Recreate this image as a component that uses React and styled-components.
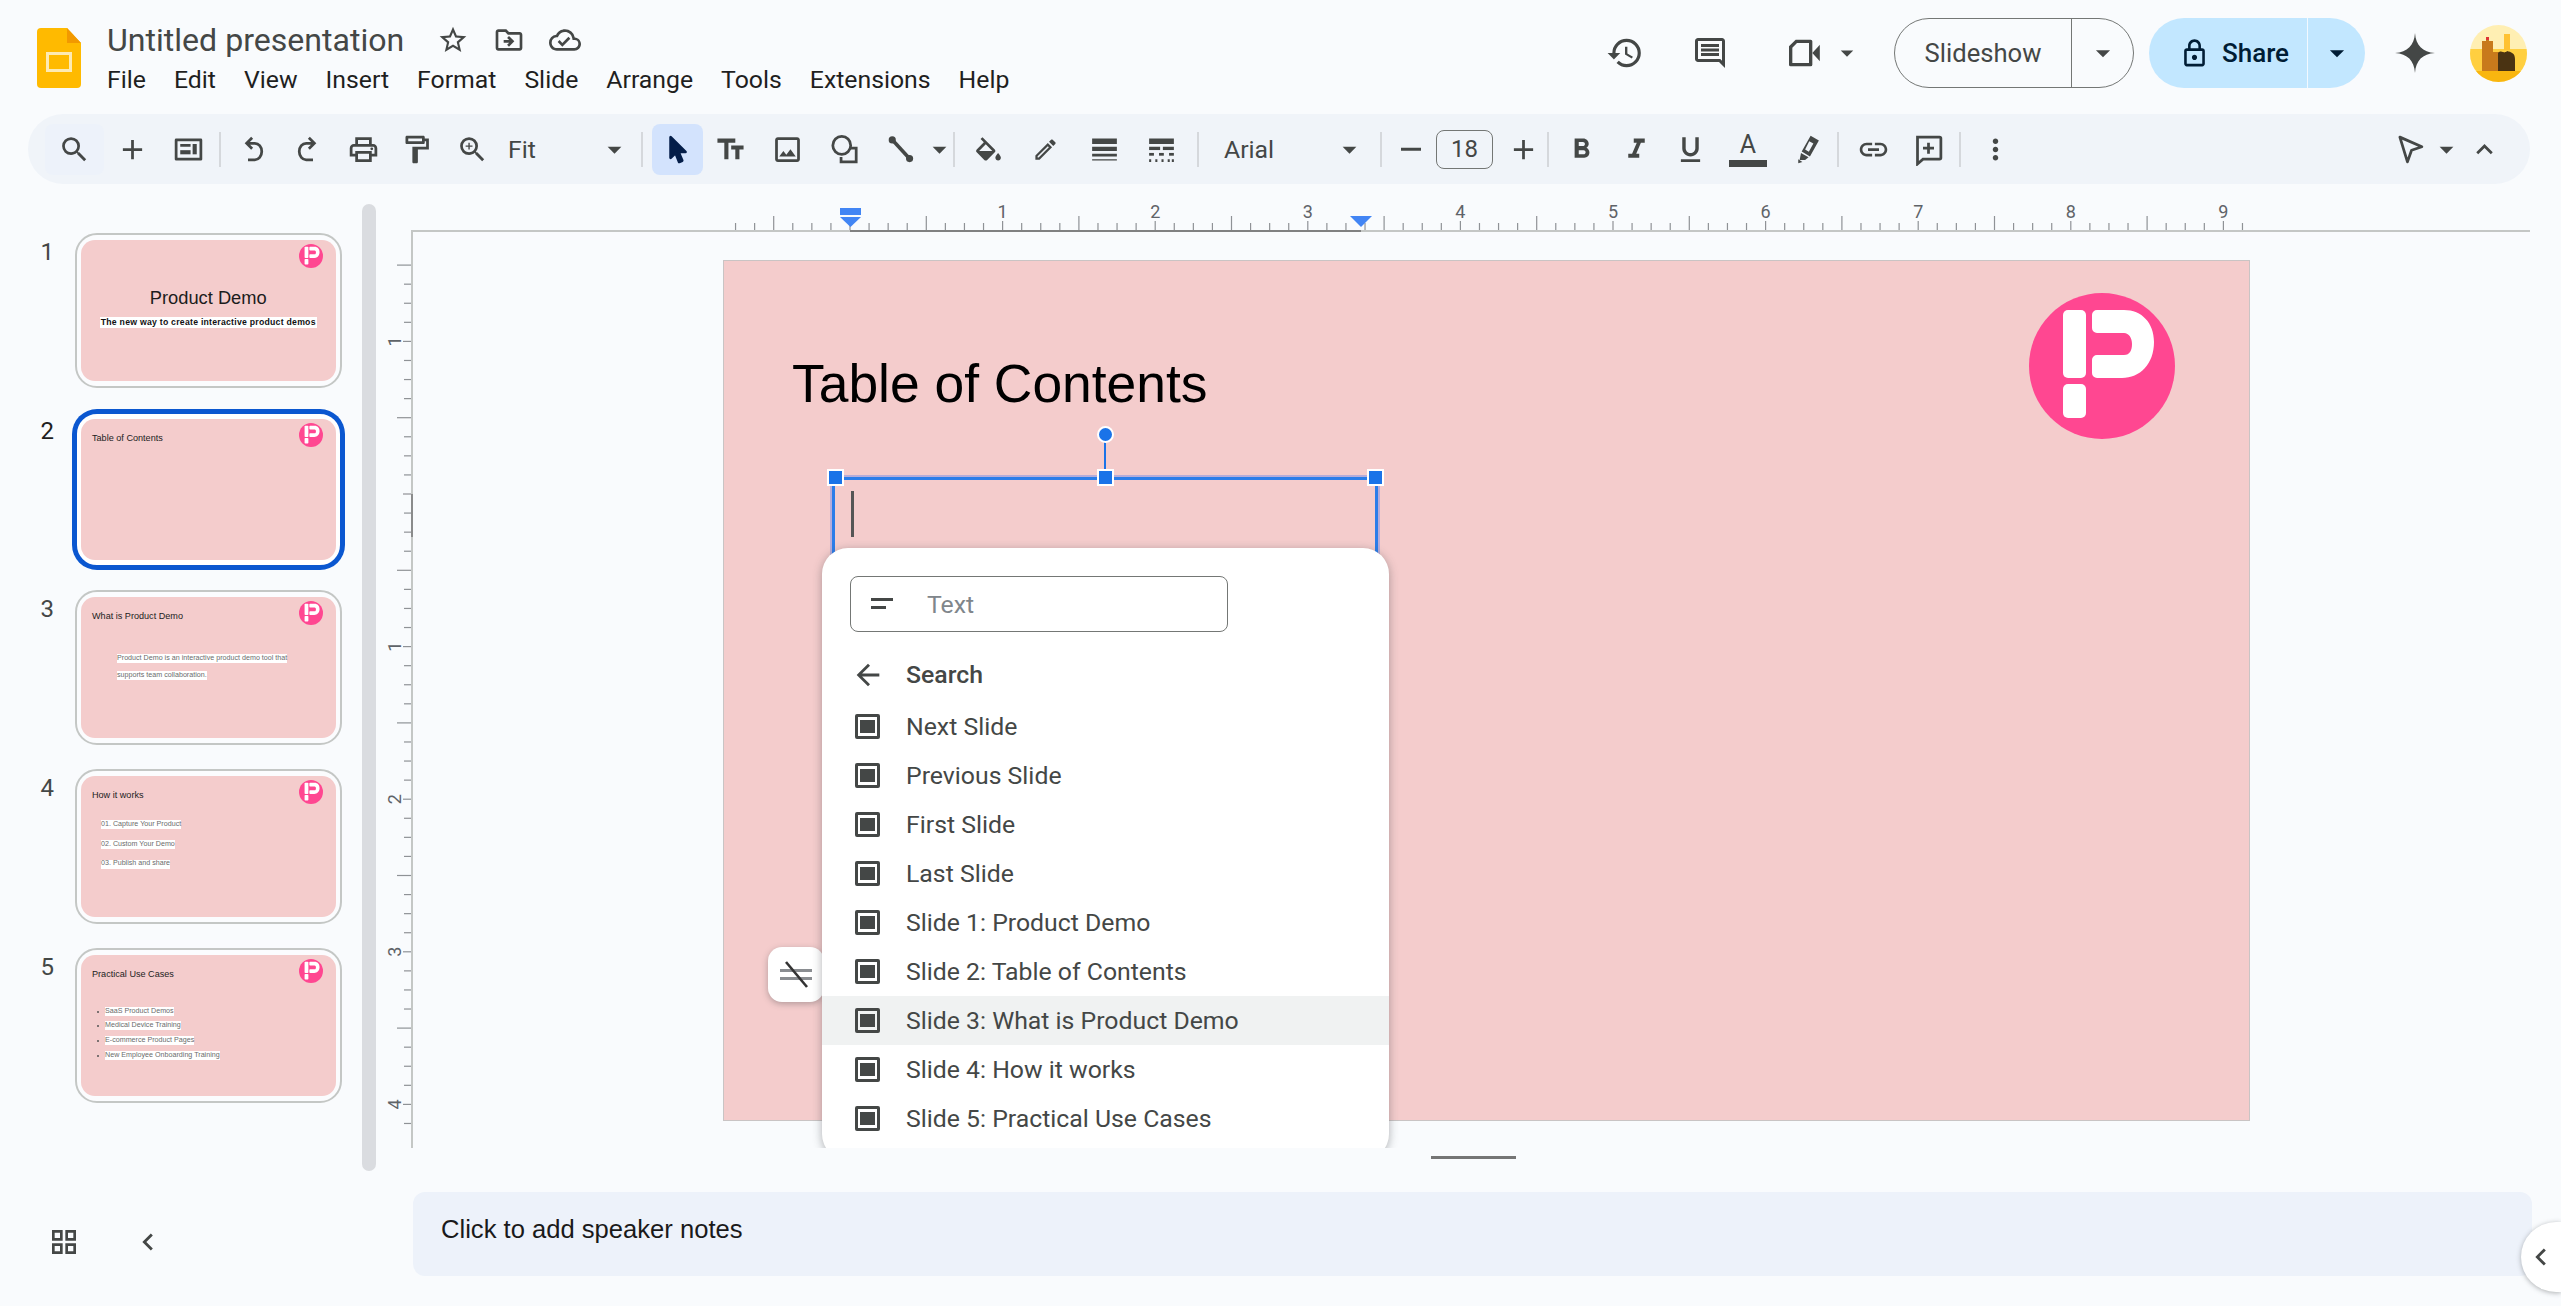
import React from 'react';
import styled, { createGlobalStyle } from 'styled-components';
import {
  MdSearch, MdAdd, MdOutlinePrint, MdOutlineFormatPaint, MdZoomIn,
  MdOutlineTextFields, MdOutlineImage, MdOutlineEdit,
  MdOutlineLineWeight, MdFormatBold, MdFormatItalic, MdFormatUnderlined, MdLink,
  MdMoreVert, MdHistory, MdArrowDropDown, MdArrowBack, MdOutlineLock, MdOutlineStarBorder,
  MdOutlineDriveFileMove, MdOutlineCloudDone, MdExpandLess, MdOutlineGridView,
  MdChevronLeft, MdOutlineComment
} from 'react-icons/md';

const GlobalStyle = createGlobalStyle`
  html, body {
    margin: 0;
    height: 100%;
    overflow: hidden;
    background: #f9fbfd;
    font-family: Roboto, "Liberation Sans", sans-serif;
  }
  * { box-sizing: border-box; }
`;

const Page = styled.div`
  position: relative;
  width: 2561px;
  height: 1306px;
  overflow: hidden;
  display: flex;
  flex-direction: column;
  color: #444746;
`;

/* header */
const Header = styled.header`
  height: 114px;
  flex: none;
  display: flex;
  justify-content: space-between;
`;

const HeaderLeft = styled.div`
  display: flex;
  align-items: flex-start;
  padding: 20px 0 0 37px;
  gap: 26px;
`;

const LogoBox = styled.div`
  margin-top: 8px;
  width: 44px;
  height: 60px;
`;

const TitleBlock = styled.div`
  display: flex;
  flex-direction: column;
`;

const TitleRow = styled.div`
  display: flex;
  align-items: center;
  height: 39px;
  gap: 24px;
`;

const DocTitle = styled.div`
  font-size: 32.1px;
  line-height: 40px;
  color: #444746;
  margin-right: 9px;
`;

const TitleIcon = styled.span`
  display: flex;
  width: 32px;
  justify-content: center;
  font-size: 32px;
  color: #444746;
`;

const MenuBar = styled.nav`
  display: flex;
  gap: 28px;
  height: 40px;
  align-items: center;
  font-size: 24.8px;
  color: #1f1f1f;
`;

const HeaderRight = styled.div`
  display: flex;
  align-items: flex-start;
  padding: 18px 34px 0 0;
`;

const ActionIcon = styled.span`
  display: flex;
  align-items: center;
  justify-content: center;
  height: 70px;
  width: ${({ $w }) => $w || 56}px;
  margin-left: ${({ $ml }) => $ml || 0}px;
  font-size: ${({ $size }) => $size || 38}px;
  color: #444746;
`;

const SplitButton = styled.div`
  display: flex;
  height: 70px;
  width: ${({ $w }) => $w}px;
  margin-left: ${({ $ml }) => $ml}px;
  border-radius: 35px;
  border: ${({ $filled }) => ($filled ? 'none' : '1.5px solid #747775')};
  background: ${({ $filled }) => ($filled ? '#c2e7ff' : 'transparent')};
  color: ${({ $filled }) => ($filled ? '#001d35' : '#444746')};
  font-size: ${({ $filled }) => ($filled ? 26 : 25.6)}px;
  font-weight: ${({ $filled }) => ($filled ? 500 : 400)};
`;

const SplitMain = styled.div`
  display: flex;
  align-items: center;
  justify-content: center;
  gap: 12px;
  width: ${({ $w }) => $w}px;
  padding-left: ${({ $pl }) => $pl || 0}px;
`;

const SplitDrop = styled.div`
  flex: 1;
  display: flex;
  align-items: center;
  justify-content: center;
  font-size: 34px;
  border-left: 1.5px solid ${({ $light }) => ($light ? '#f2f9ff' : '#747775')};
`;

const Avatar = styled.div`
  width: 57px;
  height: 57px;
  margin: 7px 0 0 30px;
  border-radius: 50%;
  overflow: hidden;
`;

/* toolbar */
const Toolbar = styled.div`
  flex: none;
  display: flex;
  align-items: center;
  height: 70px;
  margin: 0 31px 0 28px;
  padding: 0 18px 0 17px;
  border-radius: 35px;
  background: #f0f4f9;
`;

const Tool = styled.span`
  flex: none;
  display: flex;
  align-items: center;
  justify-content: center;
  height: 51px;
  width: ${({ $w }) => $w}px;
  margin-left: ${({ $ml }) => $ml || 0}px;
  font-size: ${({ $size }) => $size || 33}px;
  border-radius: 8px;
  color: ${({ $active }) => ($active ? '#041e49' : '#444746')};
  background: ${({ $active, $soft }) => ($active ? '#d3e3fd' : $soft ? '#edf2fa' : 'transparent')};

  svg {
    flex: none;
  }
`;

const ToolText = styled.span`
  flex: none;
  width: ${({ $w }) => $w}px;
  padding-left: ${({ $pl }) => $pl}px;
  font-size: 24.8px;
  color: #444746;
`;

const ToolSep = styled.span`
  flex: none;
  width: 2px;
  height: 35px;
  margin: 0 3px 0 ${({ $ml }) => $ml || 3}px;
  background: #d5d8dc;
`;

const SizeInput = styled.span`
  flex: none;
  display: flex;
  align-items: center;
  justify-content: center;
  width: 57px;
  height: 39px;
  margin-right: 10px;
  border: 1.5px solid #747775;
  border-radius: 8px;
  font-size: 24px;
`;

const ColorA = styled.span`
  display: flex;
  flex-direction: column;
  align-items: center;
  width: 38px;
  font-size: 25px;
  line-height: 26px;
  color: #444746;

  &::after {
    content: '';
    width: 38px;
    height: 7px;
    margin-top: 2px;
    background: #444746;
  }
`;

const Spacer = styled.div`
  flex: 1;
`;

/* workspace */
const Workspace = styled.div`
  flex: 1;
  display: flex;
  min-height: 0;
`;

const Sidebar = styled.aside`
  flex: none;
  width: 380px;
  display: flex;
  flex-direction: column;
`;

const FilmArea = styled.div`
  display: flex;
  height: 987px;
`;

const ThumbList = styled.div`
  width: 362px;
  display: flex;
  flex-direction: column;
  gap: 23.7px;
  padding-top: 49px;
`;

const Scrollbar = styled.div`
  width: 14px;
  margin-top: 20px;
  border-radius: 7px;
  background: #dadce0;
`;

const ThumbRow = styled.div`
  display: flex;
  align-items: flex-start;
`;

const ThumbNum = styled.div`
  width: 54px;
  margin-right: 21px;
  text-align: right;
  font-size: 24px;
  line-height: 38px;
  color: ${({ $active }) => ($active ? '#1f1f1f' : '#444746')};
`;

const ThumbFrame = styled.div`
  width: 267px;
  height: 155px;
  padding: 5px 4.5px 5px 4px;
  border: 2px solid ${({ $active }) => ($active ? '#0b57d0' : '#c4c7c5')};
  box-shadow: ${({ $active }) => ($active ? '0 0 0 3px #0b57d0' : 'none')};
  border-radius: 22px;
  background: ${({ $active }) => ($active ? '#ffffff' : '#fbfcfe')};
`;

const ThumbSlide = styled.div`
  position: relative;
  height: 100%;
  padding: 13px 11px 0;
  border-radius: 14px;
  background: #f4cccc;
  font-family: "Liberation Sans", Arial, sans-serif;
`;

const ThumbLogo = styled.div`
  position: absolute;
  top: 4px;
  left: 218px;
  width: 24px;
  height: 24px;
`;

const ThumbTitle = styled.div`
  font-size: 9.1px;
  line-height: 12px;
  color: #222;
`;

const CoverSlide = styled.div`
  display: flex;
  flex-direction: column;
  align-items: center;
  padding-top: 34px;
`;

const CoverTitle = styled.div`
  font-size: 18.3px;
  line-height: 22px;
  color: #1c1c1c;
`;

const CoverSub = styled.span`
  margin-top: 8px;
  padding: 0 1px;
  font-size: 8.7px;
  line-height: 11px;
  font-weight: 700;
  letter-spacing: 0.25px;
  color: #111;
  background: #fff;
  white-space: nowrap;
`;

const ThumbBody = styled.div`
  margin: ${({ $top }) => $top}px 0 0 ${({ $left }) => $left}px;
  display: flex;
  flex-direction: column;
  align-items: flex-start;
  font-size: 7.15px;
  line-height: ${({ $lh }) => $lh}px;
  color: #6b6b6b;
`;

const ThumbLine = styled.span`
  position: relative;
  white-space: nowrap;
  background: linear-gradient(#fff, #fff) 0 50% / 100% 9px no-repeat;

  ${({ $bullet }) => $bullet && `
    &::before {
      content: '';
      position: absolute;
      left: -8px;
      top: 7px;
      width: 2px;
      height: 2px;
      border-radius: 50%;
      background: #555;
    }
  `}
`;

const SidebarFoot = styled.div`
  display: flex;
  align-items: center;
  padding: 54px 0 0 48px;
  gap: 51px;
  font-size: 32px;
  color: #444746;

  svg:last-child {
    font-size: 34px;
  }
`;

const Editor = styled.main`
  flex: 1;
  min-width: 0;
  display: flex;
  flex-direction: column;
`;

const HRuler = styled.svg`
  display: block;
  position: relative;
  z-index: 2;
  overflow: visible;
  width: 2181px;
  height: 46px;
  flex: none;
`;

const EditorBody = styled.div`
  display: flex;
  height: 918px;
  flex: none;
`;

const VRuler = styled.svg`
  display: block;
  position: relative;
  z-index: 2;
  overflow: visible;
  width: 31px;
  height: 918px;
  flex: none;
`;

const Canvas = styled.div`
  position: relative;
  width: 2119px;
  overflow: hidden;
  padding: 29px 0 0 311px;
  border-top: 2px solid #c4c7c5;
  border-left: 2px solid #c4c7c5;
`;

const Slide = styled.div`
  position: relative;
  width: 1525px;
  height: 859px;
  background: #f4cccc;
  box-shadow: 0 0 0 1px #c9c4c4;
  font-family: "Liberation Sans", Arial, sans-serif;
`;

const SlideTitle = styled.div`
  position: absolute;
  left: 68px;
  top: 88px;
  font-size: 53.4px;
  line-height: 70px;
  color: #000;
`;

const SlideLogo = styled.div`
  position: absolute;
  left: 1305px;
  top: 32px;
  width: 146px;
  height: 146px;
`;

const TextBox = styled.div`
  position: absolute;
  left: 108px;
  top: 216px;
  width: 546px;
  height: 300px;
  border: 3px solid #2b7de9;
  box-shadow: 0 0 0 2px rgba(120, 140, 230, 0.5);
`;

const Handle = styled.span`
  position: absolute;
  top: -11px;
  left: ${({ $at }) => $at};
  width: 17px;
  height: 17px;
  margin-left: -8px;
  background: #1a73e8;
  border: 2px solid #fff;
`;

const RotateLine = styled.span`
  position: absolute;
  left: 50%;
  top: -40px;
  width: 2px;
  height: 31px;
  margin-left: -1px;
  background: #1a73e8;
`;

const RotateKnob = styled.span`
  position: absolute;
  left: 50%;
  top: -54px;
  width: 17px;
  height: 17px;
  margin-left: -8.5px;
  border-radius: 50%;
  background: #1a73e8;
  border: 2px solid #fff;
`;

const Caret = styled.span`
  position: absolute;
  left: 16px;
  top: 11px;
  width: 3px;
  height: 46px;
  background: #555;
`;

const FloatButton = styled.div`
  position: absolute;
  left: 355px;
  top: 715px;
  width: 56px;
  height: 55px;
  display: flex;
  align-items: center;
  justify-content: center;
  border-radius: 14px;
  background: #fff;
  box-shadow: 0 2px 6px rgba(60, 64, 67, 0.35);
`;

const LinkMenu = styled.div`
  position: absolute;
  left: 409px;
  top: 316px;
  width: 567px;
  height: 612px;
  padding-top: 28px;
  border-radius: 26px;
  background: #fff;
  box-shadow: 0 2px 10px rgba(60, 64, 67, 0.4);
`;

const SearchBox = styled.div`
  display: flex;
  align-items: center;
  width: 378px;
  height: 56px;
  margin: 0 0 18px 28px;
  padding-left: 20px;
  gap: 34px;
  border: 1.5px solid #747775;
  border-radius: 8px;
  font-size: 24.8px;
  color: #80868b;
`;

const MenuRow = styled.div`
  display: flex;
  align-items: center;
  height: 49px;
  margin-bottom: ${({ $gapBelow }) => ($gapBelow ? '2.5px' : 0)};
  padding-left: 33px;
  gap: 26px;
  font-size: 24.8px;
  font-weight: ${({ $head }) => ($head ? 500 : 400)};
  color: #444746;
  background: ${({ $hover }) => ($hover ? '#f0f2f2' : 'transparent')};

  svg {
    flex: none;
    width: 25px;
    height: 25px;
  }
`;

const BackIcon = styled(MdArrowBack)`
  && {
    width: 34px;
    height: 34px;
    margin: 0 -4.5px;
  }
`;

const Grabber = styled.div`
  flex: none;
  width: 85px;
  height: 3px;
  margin: 8px 0 33px 1051px;
  background: #757575;
`;

const Notes = styled.div`
  flex: none;
  height: 84px;
  margin: 0 29px 0 33px;
  padding: 20px 28px;
  border-radius: 12px;
  background: #edf2fa;
  font-family: "Liberation Sans", Arial, sans-serif;
  font-size: 25.6px;
  line-height: 34px;
  color: #1a1a1a;
`;

const SideToggle = styled.div`
  position: absolute;
  right: 0;
  bottom: 14px;
  width: 40px;
  height: 70px;
  display: flex;
  align-items: center;
  justify-content: center;
  border-radius: 35px 0 0 35px;
  background: #fff;
  box-shadow: 0 1px 5px rgba(60, 64, 67, 0.4);
  font-size: 34px;
  color: #444746;
`;

const SlidesLogo = () => (
  <svg width="44" height="60" viewBox="0 0 44 60">
    <path d="M4 0h26l14 15v41a4 4 0 0 1-4 4H4a4 4 0 0 1-4-4V4a4 4 0 0 1 4-4z" fill="#ffba00" />
    <path d="M30 0l14 15H30z" fill="#f29900" />
    <rect x="10.5" y="25.5" width="23" height="17" fill="#ffba00" stroke="#fdeab3" strokeWidth="3" />
  </svg>
);

const BrandMark = () => (
  <svg width="100%" height="100%" viewBox="-73 -73 146 146">
    <circle r="73" fill="#ff4791" />
    <rect x="-39" y="-56" width="23" height="68" rx="5" fill="#fff" />
    <rect x="-39" y="18" width="23" height="34" rx="5" fill="#fff" />
    <path
      d="M-10-51a5 5 0 0 1 5-5h27c18 0 30 13 30 32 0 22-14 36-32 36H-5a5 5 0 0 1-5-5V-6a5 5 0 0 1 5-5h27c6 0 8-5 8-11s-3-11-8-11H-5a5 5 0 0 1-5-5z"
      fill="#fff"
    />
  </svg>
);

const AvatarArt = () => (
  <svg width="57" height="57" viewBox="0 0 57 57">
    <rect width="57" height="57" fill="#ffefb3" />
    <rect y="24" width="57" height="24" fill="#ffcf40" />
    <rect y="46" width="57" height="11" fill="#f9b60f" />
    <rect x="34" y="9" width="6" height="16" fill="#ffc233" />
    <path d="M12 46V16h4v-3h3v3h4v11h8c5 0 9 3 9 7v12z" fill="#c87a1c" />
    <path d="M28 46V28c4-4 6 2 9-2 4 1 8 2 8 8v12z" fill="#4a3312" />
    <rect x="16" y="12" width="3" height="3" fill="#d33" />
  </svg>
);

const NewSlideIcon = () => (
  <svg width="1em" height="1em" viewBox="0 0 24 24" fill="currentColor">
    <path d="M3 4h18a1 1 0 0 1 1 1v14a1 1 0 0 1-1 1H3a1 1 0 0 1-1-1V5a1 1 0 0 1 1-1zm1 2v12h16V6z" />
    <rect x="6" y="8" width="7.5" height="2" />
    <rect x="6" y="12.5" width="7.5" height="3" />
    <rect x="15" y="8" width="3" height="7.5" />
  </svg>
);

const UndoIcon = ({ flip }) => (
  <svg
    width="1em"
    height="1em"
    viewBox="0 0 24 24"
    fill="none"
    stroke="currentColor"
    strokeWidth="2"
    transform={flip ? 'scale(-1 1)' : undefined}
  >
    <path d="M11 3.500L7 7.500l4 4M7.500 7.500H13a5 6 0 0 1 0 12H8" />
  </svg>
);

const FillIcon = () => (
  <svg width="1em" height="1em" viewBox="0 -3 24 24" fill="currentColor">
    <path d="M16.56 8.94 7.62 0 6.21 1.41l2.38 2.38-5.15 5.150c-.59.59-.59 1.540 0 2.120l5.500 5.500c.29.29.68.44 1.060.44s.77-.15 1.060-.44l5.500-5.500c.59-.58.59-1.530 0-2.120zM5.210 10 10 5.210 14.790 10H5.210zM19 11.500s-2 2.170-2 3.500c0 1.100.9 2 2 2s2-.9 2-2c0-1.330-2-3.500-2-3.500z" />
  </svg>
);

const SelectIcon = () => (
  <svg width="1em" height="1em" viewBox="0 0 24 24" fill="none" stroke="currentColor" strokeWidth="2" strokeLinejoin="round">
    <path d="M7 3v15l3.600-3.400 2.600 6.400 2.200-.9-2.600-6.300h5z" fill="currentColor" />
  </svg>
);

const ShapeIcon = () => (
  <svg width="1em" height="1em" viewBox="0 0 24 24" fill="none" stroke="currentColor" strokeWidth="2">
    <circle cx="10" cy="9" r="6.500" />
    <path d="M16 11h4.500v10H9.500v-3.500" />
  </svg>
);

const LineIcon = () => (
  <svg width="1em" height="1em" viewBox="0 0 24 24" fill="currentColor">
    <path d="M7 6l11 12" stroke="currentColor" strokeWidth="2.600" />
    <circle cx="6" cy="5" r="2.600" />
    <circle cx="18.600" cy="18.600" r="2.600" />
  </svg>
);

const DashIcon = () => (
  <svg width="1em" height="1em" viewBox="0 0 24 24" fill="currentColor">
    <rect x="3" y="4" width="18" height="4" />
    <rect x="3" y="10" width="8" height="2.400" />
    <rect x="13" y="10" width="8" height="2.400" />
    <rect x="3" y="14.500" width="3.500" height="2" />
    <rect x="10.200" y="14.500" width="3.500" height="2" />
    <rect x="17.500" y="14.500" width="3.500" height="2" />
    <path d="M3 19h1.500v2H3zm4.500 0H9v2H7.500zm4.500 0h1.500v2H12zm4.500 0H18v2h-1.500zm3 0H21v2h-1.500z" />
  </svg>
);

const HighlightIcon = () => (
  <svg width="1em" height="1em" viewBox="0 0 24 24" fill="currentColor">
    <path d="M15 2l6 3.500-6.500 11.500-6-3.500zm-1 4L11 12l2.700 1.600L17 7.600z" />
    <path d="M8 14.500l5.500 3.200-2.500 2H7z" />
    <path d="M6 19l3 2-3 1z" />
  </svg>
);

const AddCommentIcon = () => (
  <svg width="1em" height="1em" viewBox="0 0 24 24" fill="none" stroke="currentColor" strokeWidth="2">
    <path d="M4 3h16a1 1 0 0 1 1 1v14a1 1 0 0 1-1 1H8l-4 3.500z" />
    <path d="M12 7v8M8 11h8" />
  </svg>
);

const PointerIcon = () => (
  <svg width="1em" height="1em" viewBox="0 0 24 24" fill="none" stroke="currentColor" strokeWidth="2" strokeLinejoin="round">
    <path d="M5 3l16 7-7.500 2.500L10.500 21z" />
  </svg>
);

const MeetIcon = () => (
  <svg width="1em" height="1em" viewBox="0 0 24 24" fill="currentColor">
    <path d="M7 4h9a1 1 0 0 1 1 1v14a1 1 0 0 1-1 1H4a1 1 0 0 1-1-1V8zm.800 2L5 8.800V18h10V6z" />
    <path d="M17 12l4.500-5v10z" />
  </svg>
);

const SparkIcon = () => (
  <svg width="1em" height="1em" viewBox="0 0 24 24" fill="currentColor">
    <path d="M12 0c.5 7.500 4.500 11.500 12 12-7.500.5-11.500 4.500-12 12-.5-7.500-4.500-11.500-12-12 7.500-.5 11.500-4.500 12-12z" />
  </svg>
);

const SlideRowIcon = () => (
  <svg viewBox="0 0 25 25" fill="#444746">
    <path d="M2 0h21a2 2 0 0 1 2 2v21a2 2 0 0 1-2 2H2a2 2 0 0 1-2-2V2a2 2 0 0 1 2-2zm1 3v19h19V3z" />
    <rect x="5" y="6" width="15" height="13" />
  </svg>
);

const TextFilterIcon = () => (
  <svg width="22" height="14" viewBox="0 0 22 14" fill="#444746">
    <rect y="1" width="22" height="3" />
    <rect y="9" width="15" height="3" />
  </svg>
);

const NoWrapIcon = () => (
  <svg width="34" height="34" viewBox="0 0 34 34">
    <rect x="1" y="11" width="32" height="3" fill="#8a8d91" />
    <rect x="1" y="19" width="32" height="3" fill="#8a8d91" />
    <path d="M7 4l21 25" stroke="#333" strokeWidth="2.600" />
  </svg>
);

const INCH = 152.6;
const STEP = INCH / 8;

// horizontal ruler, x values are relative to the 380px sidebar edge
const HorizontalRuler = () => {
  const origin = 850 - 380;
  const ticks = [];
  for (let k = -6; k <= 73; k += 1) ticks.push(k);
  return (
    <HRuler viewBox="0 0 2181 46">
      {ticks.map((k) => {
        const x = origin + k * STEP;
        const len = k % 8 === 0 ? 9 : k % 4 === 0 ? 14 : 7;
        return <line key={k} x1={x} x2={x} y1={46 - len} y2={46} stroke="#8f9296" strokeWidth="1.2" />;
      })}
      {[1, 2, 3, 4, 5, 6, 7, 8, 9].map((n) => (
        <text key={n} x={origin + n * INCH} y={34} textAnchor="middle" fontSize="18" fontFamily="Roboto" fill="#5f6368">{n}</text>
      ))}
      <line x1={origin} x2={981} y1={47} y2={47} stroke="#6a6a6a" strokeWidth="1.6" />
      <rect x={origin - 10} y="24" width="21" height="7" fill="#4285f4" />
      <path d={`M${origin - 10} 33h21l-10.500 10z`} fill="#4285f4" />
      <path d="M970 32h22l-11 11z" fill="#4285f4" />
    </HRuler>
  );
};

const VerticalRuler = () => {
  const origin = 494 - 230;
  const ticks = [];
  for (let k = -12; k <= 33; k += 1) ticks.push(k);
  return (
    <VRuler viewBox="0 0 31 918">
      {ticks.map((k) => {
        const y = origin + k * STEP;
        const len = k % 8 === 0 ? 8 : k % 4 === 0 ? 14 : 7;
        return <line key={k} x1={31 - len} x2={31} y1={y} y2={y} stroke="#8f9296" strokeWidth="1.2" />;
      })}
      {[[-8, 1], [8, 1], [16, 2], [24, 3], [32, 4]].map(([k, n]) => (
        <text
          key={k}
          transform={`translate(21 ${origin + k * STEP}) rotate(-90)`}
          textAnchor="middle"
          fontSize="18"
          fontFamily="Roboto"
          fill="#5f6368"
        >
          {n}
        </text>
      ))}
      <line x1="32" x2="32" y1={origin} y2={origin + 43} stroke="#777" strokeWidth="1.5" />
    </VRuler>
  );
};

const MENU_ITEMS = ['File', 'Edit', 'View', 'Insert', 'Format', 'Slide', 'Arrange', 'Tools', 'Extensions', 'Help'];

const LINK_ITEMS = [
  'Next Slide',
  'Previous Slide',
  'First Slide',
  'Last Slide',
  'Slide 1: Product Demo',
  'Slide 2: Table of Contents',
  'Slide 3: What is Product Demo',
  'Slide 4: How it works',
  'Slide 5: Practical Use Cases'
];

const Thumbnail = ({ num, active, children }) => (
  <ThumbRow>
    <ThumbNum $active={active}>{num}</ThumbNum>
    <ThumbFrame $active={active}>
      <ThumbSlide>
        <ThumbLogo><BrandMark /></ThumbLogo>
        {children}
      </ThumbSlide>
    </ThumbFrame>
  </ThumbRow>
);

const App = () => (
  <Page>
    <GlobalStyle />
    <Header>
      <HeaderLeft>
        <LogoBox><SlidesLogo /></LogoBox>
        <TitleBlock>
          <TitleRow>
            <DocTitle>Untitled presentation</DocTitle>
            <TitleIcon><MdOutlineStarBorder /></TitleIcon>
            <TitleIcon><MdOutlineDriveFileMove /></TitleIcon>
            <TitleIcon><MdOutlineCloudDone /></TitleIcon>
          </TitleRow>
          <MenuBar>
            {MENU_ITEMS.map((item) => <span key={item}>{item}</span>)}
          </MenuBar>
        </TitleBlock>
      </HeaderLeft>
      <HeaderRight>
        <ActionIcon><MdHistory /></ActionIcon>
        <ActionIcon $ml={29} $size={36}><MdOutlineComment /></ActionIcon>
        <ActionIcon $ml={38} $size={40}><MeetIcon /></ActionIcon>
        <ActionIcon $w={30} $size={32}><MdArrowDropDown /></ActionIcon>
        <SplitButton $w={240} $ml={32}>
          <SplitMain $w={176}>Slideshow</SplitMain>
          <SplitDrop><MdArrowDropDown /></SplitDrop>
        </SplitButton>
        <SplitButton $w={216} $ml={15} $filled>
          <SplitMain $w={158} $pl={12}><MdOutlineLock size={31} />Share</SplitMain>
          <SplitDrop $light><MdArrowDropDown /></SplitDrop>
        </SplitButton>
        <ActionIcon $w={50} $ml={25} $size={40}><SparkIcon /></ActionIcon>
        <Avatar><AvatarArt /></Avatar>
      </HeaderRight>
    </Header>

    <Toolbar>
      <Tool $w={59} $soft><MdSearch /></Tool>
      <Tool $w={56}><MdAdd /></Tool>
      <Tool $w={56}><NewSlideIcon /></Tool>
      <ToolSep />
      <Tool $w={58}><UndoIcon /></Tool>
      <Tool $w={50}><UndoIcon flip /></Tool>
      <Tool $w={62}><MdOutlinePrint /></Tool>
      <Tool $w={44}><MdOutlineFormatPaint /></Tool>
      <Tool $w={68}><MdZoomIn /></Tool>
      <ToolText $w={84} $pl={2}>Fit</ToolText>
      <Tool $w={48}><MdArrowDropDown /></Tool>
      <ToolSep />
      <Tool $w={51} $ml={6} $active><SelectIcon /></Tool>
      <Tool $w={54}><MdOutlineTextFields /></Tool>
      <Tool $w={60}><MdOutlineImage /></Tool>
      <Tool $w={54}><ShapeIcon /></Tool>
      <Tool $w={58}><LineIcon /></Tool>
      <Tool $w={21}><MdArrowDropDown /></Tool>
      <ToolSep />
      <Tool $w={60}><FillIcon /></Tool>
      <Tool $w={54} $size={27}><MdOutlineEdit /></Tool>
      <Tool $w={64}><MdOutlineLineWeight /></Tool>
      <Tool $w={50}><DashIcon /></Tool>
      <ToolSep $ml={11} />
      <ToolText $w={123} $pl={22}>Arial</ToolText>
      <Tool $w={48}><MdArrowDropDown /></Tool>
      <ToolSep $ml={7} />
      <Tool $w={51} $size={30}><svg width="1em" height="1em" viewBox="0 0 24 24" fill="currentColor"><rect x="4" y="11" width="16" height="2.400" /></svg></Tool>
      <SizeInput>18</SizeInput>
      <Tool $w={41}><MdAdd /></Tool>
      <ToolSep />
      <Tool $w={58}><MdFormatBold /></Tool>
      <Tool $w={52}><MdFormatItalic /></Tool>
      <Tool $w={56}><MdFormatUnderlined /></Tool>
      <Tool $w={60}><ColorA>A</ColorA></Tool>
      <Tool $w={56}><HighlightIcon /></Tool>
      <ToolSep />
      <Tool $w={62}><MdLink /></Tool>
      <Tool $w={48}><AddCommentIcon /></Tool>
      <ToolSep $ml={7} />
      <Tool $w={62}><MdMoreVert /></Tool>
      <Spacer />
      <Tool $w={54}><PointerIcon /></Tool>
      <Tool $w={20}><MdArrowDropDown /></Tool>
      <Tool $w={56}><MdExpandLess /></Tool>
    </Toolbar>

    <Workspace>
      <Sidebar>
        <FilmArea>
          <ThumbList>
            <Thumbnail num={1}>
              <CoverSlide>
                <CoverTitle>Product Demo</CoverTitle>
                <CoverSub>The new way to create interactive product demos</CoverSub>
              </CoverSlide>
            </Thumbnail>
            <Thumbnail num={2} active>
              <ThumbTitle>Table of Contents</ThumbTitle>
            </Thumbnail>
            <Thumbnail num={3}>
              <ThumbTitle>What is Product Demo</ThumbTitle>
              <ThumbBody $top={28} $left={25} $lh={17}>
                <ThumbLine>Product Demo is an interactive product demo tool that</ThumbLine>
                <ThumbLine>supports team collaboration.</ThumbLine>
              </ThumbBody>
            </Thumbnail>
            <Thumbnail num={4}>
              <ThumbTitle>How it works</ThumbTitle>
              <ThumbBody $top={14} $left={9} $lh={19.6}>
                <ThumbLine>01. Capture Your Product</ThumbLine>
                <ThumbLine>02. Custom Your Demo</ThumbLine>
                <ThumbLine>03. Publish and share</ThumbLine>
              </ThumbBody>
            </Thumbnail>
            <Thumbnail num={5}>
              <ThumbTitle>Practical Use Cases</ThumbTitle>
              <ThumbBody $top={24} $left={13} $lh={14.700}>
                <ThumbLine $bullet>SaaS Product Demos</ThumbLine>
                <ThumbLine $bullet>Medical Device Training</ThumbLine>
                <ThumbLine $bullet>E-commerce Product Pages</ThumbLine>
                <ThumbLine $bullet>New Employee Onboarding Training</ThumbLine>
              </ThumbBody>
            </Thumbnail>
          </ThumbList>
          <Scrollbar />
        </FilmArea>
        <SidebarFoot>
          <MdOutlineGridView />
          <MdChevronLeft />
        </SidebarFoot>
      </Sidebar>

      <Editor>
        <HorizontalRuler />
        <EditorBody>
          <VerticalRuler />
          <Canvas>
            <Slide>
              <SlideTitle>Table of Contents</SlideTitle>
              <SlideLogo><BrandMark /></SlideLogo>
              <TextBox>
                <RotateLine />
                <RotateKnob />
                <Handle $at="0" />
                <Handle $at="50%" />
                <Handle $at="100%" />
                <Caret />
              </TextBox>
            </Slide>
            <FloatButton><NoWrapIcon /></FloatButton>
            <LinkMenu>
              <SearchBox><TextFilterIcon />Text</SearchBox>
              <MenuRow $head $gapBelow>
                <BackIcon />
                Search
              </MenuRow>
              {LINK_ITEMS.map((item) => (
                <MenuRow key={item} $hover={item.startsWith('Slide 3')}>
                  <SlideRowIcon />
                  {item}
                </MenuRow>
              ))}
            </LinkMenu>
          </Canvas>
        </EditorBody>
        <Grabber />
        <Notes>Click to add speaker notes</Notes>
      </Editor>
    </Workspace>
    <SideToggle><MdChevronLeft /></SideToggle>
  </Page>
);

export default App;
